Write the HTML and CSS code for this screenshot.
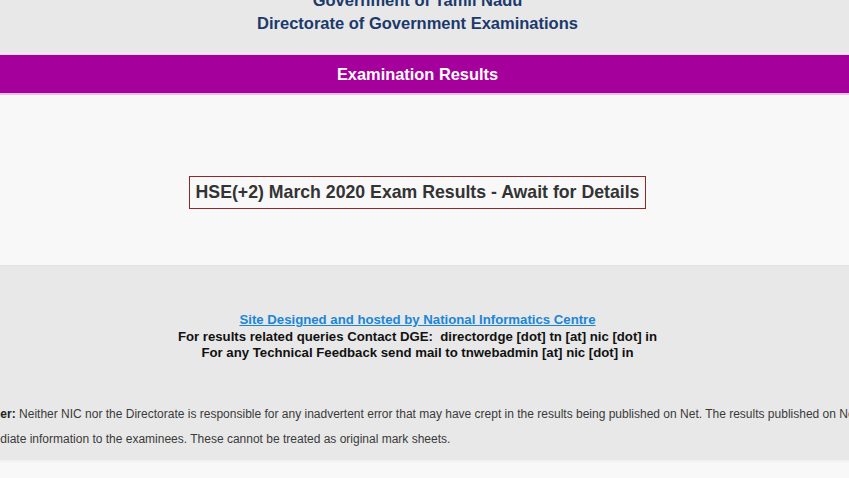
FILE: index.html
```html
<!DOCTYPE html>
<html>
<head>
<meta charset="utf-8">
<link rel="stylesheet" href="styles.css">
</head>
<body>
<div class="page">
<header class="top">
  <div class="gov">Government of Tamil Nadu</div>
  <div class="dir">Directorate of Government Examinations</div>
</header>
<div class="band"><span>Examination Results</span></div>
<main class="content">
  <div class="notice">HSE(+2) March 2020 Exam Results - Await for Details</div>
</main>
<footer class="foot">
  <div class="credits">
    <a class="nic" href="#">Site Designed and hosted by National Informatics Centre</a>
    <div class="line">For results related queries Contact DGE:&nbsp; directordge [dot] tn [at] nic [dot] in</div>
    <div class="line">For any Technical Feedback send mail to tnwebadmin [at] nic [dot] in</div>
  </div>
  <div class="disclaimer">
    <p class="d1"><b>Disclaimer:</b> Neither NIC nor the Directorate is responsible for any inadvertent error that may have crept in the results being published on Net. The results published on Net are for</p>
    <p class="d2">immediate information to the examinees. These cannot be treated as original mark sheets.</p>
  </div>
</footer>
<div class="bottom"></div>
</div>
</body>
</html>
```
FILE: styles.css
```css
html, body {
  margin: 0;
  padding: 0;
  background: #f8f8f8;
  font-family: "Liberation Sans", Arial, sans-serif;
  overflow: hidden;
}
.page {
  margin-left: -14px;
  width: 863px;
}
.top {
  background: #e8e8e8;
  height: 52px;
  text-align: center;
  color: #1b3a6b;
  font-weight: bold;
  font-size: 16.5px;
  line-height: 23px;
  overflow: hidden;
}
.gov {
  margin-top: -11px;
}
.band {
  border-top: 3px solid #f6e4f4;
  border-bottom: 2px solid #e9bfe5;
  background: #a5009b;
  height: 38px;
  display: flex;
  align-items: center;
  justify-content: center;
  color: #fff;
  font-weight: bold;
  font-size: 16.4px;
}
.content {
  height: 170px;
  display: flex;
  justify-content: center;
  align-items: flex-start;
  background: #f8f8f8;
}
.notice {
  margin-top: 81px;
  border: 1px solid #8c2a2a;
  padding: 0 6px;
  height: 31px;
  line-height: 31px;
  font-weight: bold;
  font-size: 17.7px;
  color: #333;
}
.foot {
  background: #e8e8e8;
  height: 194px;
  border-top: 1px solid #e2e2e2;
  overflow: hidden;
}
.credits {
  padding-top: 46px;
  text-align: center;
  font-weight: bold;
  font-size: 13.2px;
  line-height: 16.5px;
  color: #111;
}
.nic {
  color: #1b86d6;
  text-decoration: underline;
}
.line {
  display: block;
}
.disclaimer {
  margin-top: 40px;
  font-size: 12px;
  color: #3a3a3a;
}
.disclaimer p {
  margin: 0;
  line-height: 25px;
  white-space: nowrap;
}
.disclaimer .d1 {
  margin-left: -35px;
}
.disclaimer .d2 {
  margin-left: -15px;
}
.disclaimer b {
  color: #222;
}
.bottom {
  height: 17px;
  background: #f8f8f8;
  border-top: 2px solid #f2f2f2;
}
```
